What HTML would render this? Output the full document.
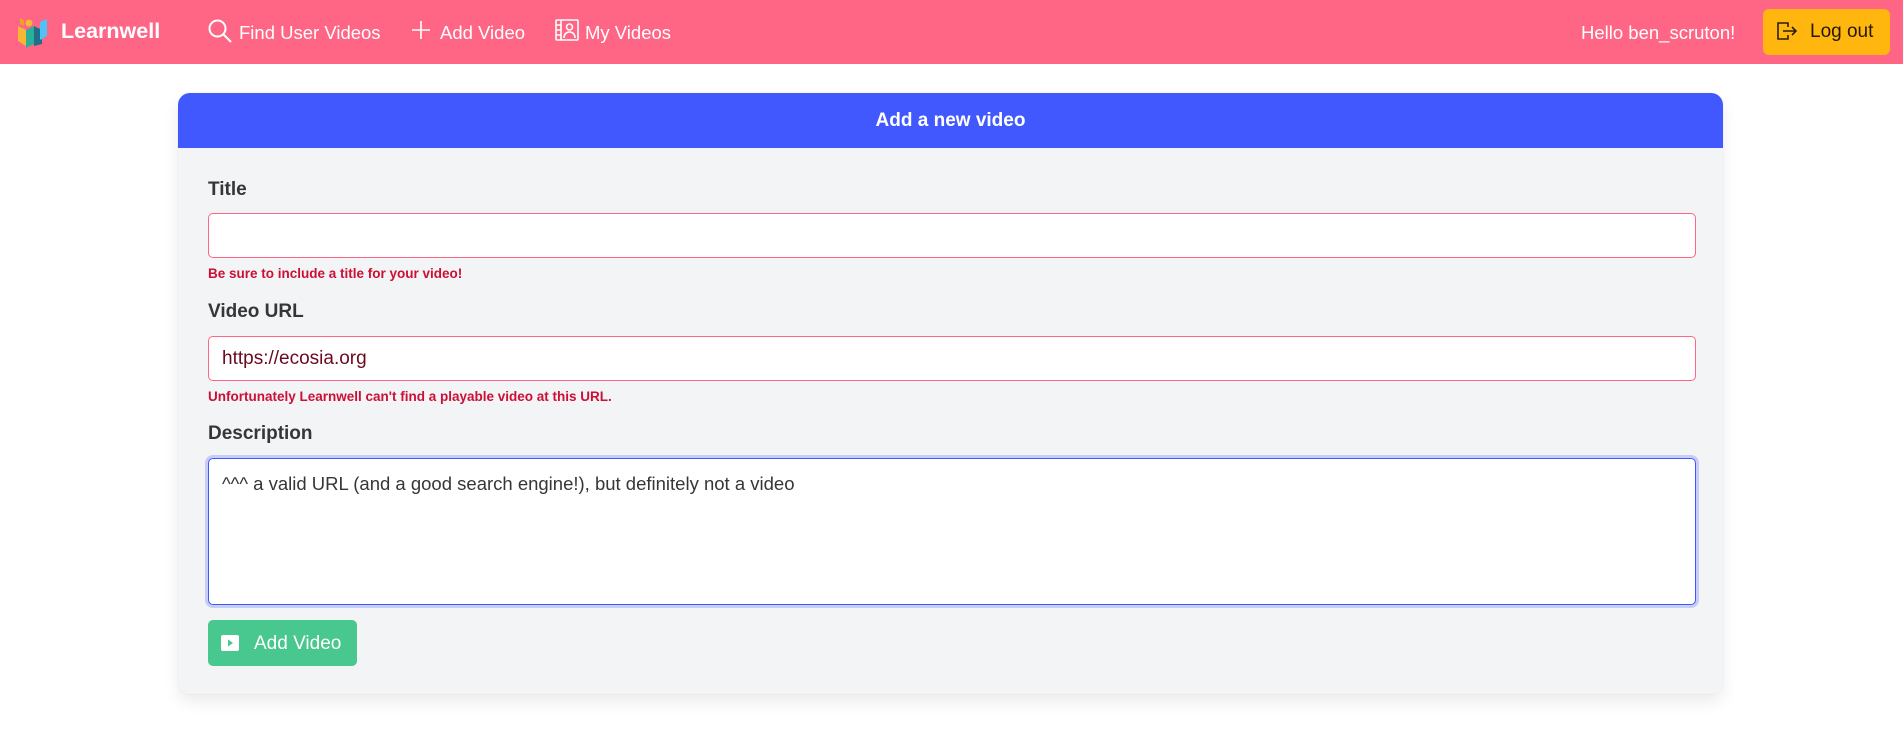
<!DOCTYPE html>
<html><head><meta charset="utf-8"><style>
*{box-sizing:border-box;margin:0;padding:0}
body{width:1903px;height:756px;background:#fff;font-family:"Liberation Sans",sans-serif;position:relative;overflow:hidden;color:#363636}
.nav{position:absolute;left:0;top:0;width:1903px;height:64px;background:#ff6584;color:#fff}
.nav .t{position:absolute;top:22px;font-size:18.5px;white-space:nowrap}
.card{position:absolute;left:178px;top:93px;width:1545px;height:601px;background:#f3f4f6;border-radius:12px;box-shadow:0 8px 16px rgba(10,10,10,.08),0 0 0 1px rgba(10,10,10,.02)}
.hd{height:55px;background:#4158ff;border-radius:12px 12px 0 0;color:#fff;font-weight:bold;font-size:19px;text-align:center;line-height:55px}
.lbl{position:absolute;left:30px;font-weight:bold;font-size:19px;color:#363636}
.inp{position:absolute;left:30px;width:1488px;background:#fff;border:1px solid #ff6584;border-radius:5px}
.err{position:absolute;left:30px;font-weight:bold;font-size:13.5px;color:#cc0f35}
</style></head><body>
<div class="nav">
<svg style="position:absolute;left:15px;top:16px" width="34" height="34" viewBox="0 0 34 34"><polygon points="3,10 11,14 11,30 3,25" fill="#f7b733"/><polygon points="11,14 19,10 19,28 11,32" fill="#2bae9a"/><polygon points="19,10 27,14 27,28 19,30" fill="#1f6f8b"/><polygon points="25,6 32,3 32,20 25,24" fill="#4fc3f7"/><circle cx="14" cy="7" r="3.5" fill="#f7b733"/><polygon points="5,2 9,4 9,10 5,8" fill="#f0a020"/></svg>
<div class="t" style="left:61px;top:19px;font-size:21.5px;font-weight:bold">Learnwell</div>
<svg style="position:absolute;left:207px;top:18px" width="26" height="26" viewBox="0 0 26 26" fill="none" stroke="#fff" stroke-width="2"><circle cx="10.5" cy="10.5" r="8"/><path d="M16.5 16.5L24 24"/></svg>
<div class="t" style="left:239px">Find User Videos</div>
<svg style="position:absolute;left:411px;top:20px" width="20" height="20" viewBox="0 0 20 20" stroke="#fff" stroke-width="1.6"><path d="M10 1V19M1 10H19"/></svg>
<div class="t" style="left:440px">Add Video</div>
<svg style="position:absolute;left:555px;top:19px" width="24" height="22" viewBox="0 0 24 22" fill="none" stroke="#fff" stroke-width="1.6"><rect x="1" y="1" width="22" height="20" rx="1"/><path d="M6 1V21M1 6H6M1 11H6M1 16H6"/><circle cx="14.5" cy="8" r="3"/><path d="M9 19c0-4 2.5-6 5.5-6s5.5 2 5.5 6"/></svg>
<div class="t" style="left:585px">My Videos</div>
<div class="t" style="left:1581px">Hello ben_scruton!</div>
<div style="position:absolute;left:1763px;top:9px;width:127px;height:46px;background:#ffb70f;border-radius:6px;color:#231a00;font-size:19px">
<svg style="position:absolute;left:14px;top:13px" width="20" height="18" viewBox="0 0 20 18" fill="none" stroke="#2a2000" stroke-width="1.6"><path d="M11 5V1H1V17H11V13M6 9H19M15 5L19 9L15 13"/></svg>
<span style="position:absolute;left:47px;top:12px">Log out</span></div>
</div>
<div class="card">
<div class="hd">Add a new video</div>
<div class="lbl" style="top:86px">Title</div>
<div class="inp" style="top:120px;height:45px"></div>
<div class="err" style="top:173px">Be sure to include a title for your video!</div>
<div class="lbl" style="top:208px">Video URL</div>
<div class="inp" style="top:243px;height:45px;font-size:19px;color:#6b0a1f;padding:11px 13px">https://ecosia.org</div>
<div class="err" style="top:296px">Unfortunately Learnwell can't find a playable video at this URL.</div>
<div class="lbl" style="top:330px">Description</div>
<div class="inp" style="top:365px;height:147px;border:1px solid #4158ff;box-shadow:0 0 0 3px rgba(65,88,255,.25);font-size:18.5px;color:#363636;padding:14px 13px">^^^ a valid URL (and a good search engine!), but definitely not a video</div>
<div style="position:absolute;left:30px;top:527px;width:149px;height:46px;background:#48c78e;border-radius:5px;color:#fff;font-size:19px;white-space:nowrap">
<svg style="position:absolute;left:13px;top:15px" width="18" height="16" viewBox="0 0 18 16"><rect x="0" y="0" width="18" height="16" rx="2" fill="#fff"/><path d="M7 4.5L12 8L7 11.5Z" fill="#48c78e"/></svg>
<span style="position:absolute;left:46px;top:13px">Add Video</span></div>
</div>
</body></html>
